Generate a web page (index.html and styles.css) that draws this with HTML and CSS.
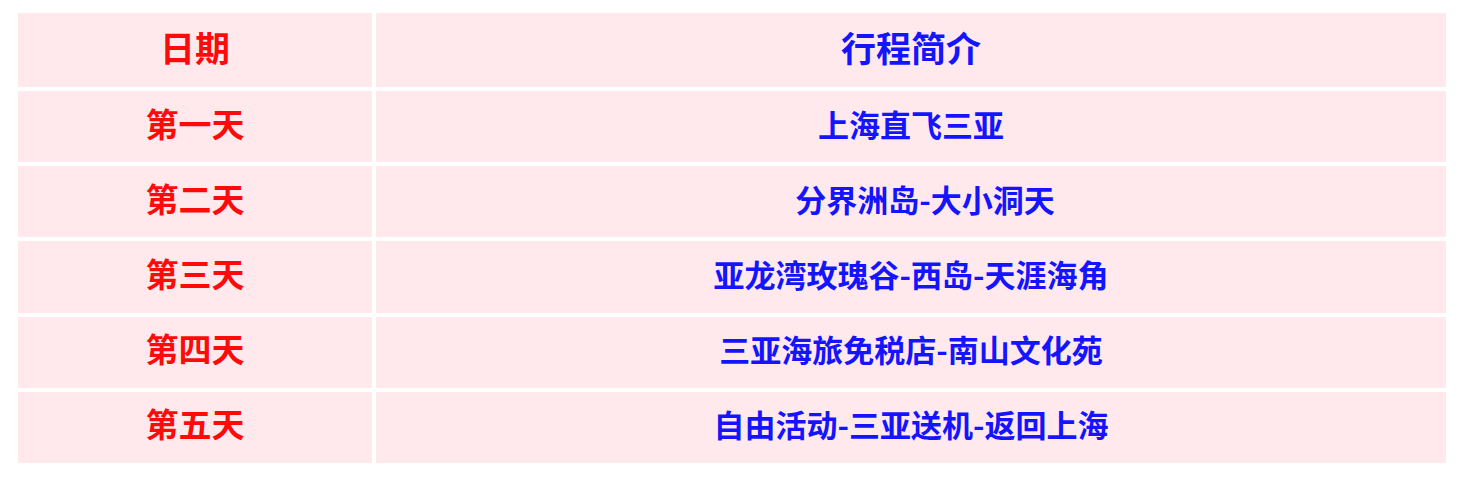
FILE: index.html
```html
<!DOCTYPE html>
<html lang="zh-CN">
<head>
<meta charset="utf-8">
<title>行程简介</title>
<link rel="stylesheet" href="styles.css">
</head>
<body>
<div class="schedule">
  <div class="cell head date">日期</div>
  <div class="cell head plan">行程简介</div>
  <div class="cell date">第一天</div>
  <div class="cell plan">上海直飞三亚</div>
  <div class="cell date">第二天</div>
  <div class="cell plan indent">分界洲岛-大小洞天</div>
  <div class="cell date">第三天</div>
  <div class="cell plan">亚龙湾玫瑰谷-西岛-天涯海角</div>
  <div class="cell date">第四天</div>
  <div class="cell plan">三亚海旅免税店-南山文化苑</div>
  <div class="cell date">第五天</div>
  <div class="cell plan">自由活动-三亚送机-返回上海</div>
</div>
</body>
</html>
```
FILE: styles.css
```css
html, body {
  margin: 0;
  padding: 0;
  background: #ffffff;
}
body {
  font-family: "Noto Sans CJK SC", "Noto Sans", sans-serif;
}
.schedule {
  margin: 13px 0 0 18px;
  width: 1428px;
  display: grid;
  grid-template-columns: 354px 1070px;
  grid-template-rows: 74px repeat(5, 71.2px);
  gap: 4px;
}
.cell {
  background: #ffe9ec;
  display: flex;
  align-items: center;
  justify-content: center;
  padding-bottom: 7px;
  box-sizing: border-box;
  font-weight: 700;
  font-size: 31px;
  line-height: 1;
}
.date {
  color: #ff0a0a;
  font-size: 33px;
}
.plan {
  color: #1414ff;
}
.head {
  font-size: 35px;
}
.indent {
  padding-left: 28px;
}
```
